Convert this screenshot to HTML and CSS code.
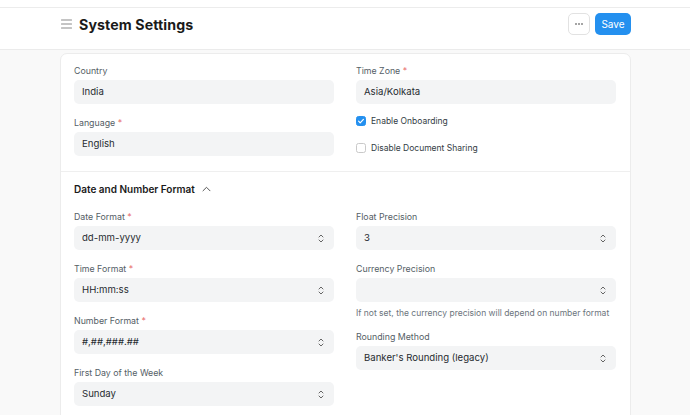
FILE: index.html
```html
<!DOCTYPE html>
<html>
<head>
<meta charset="utf-8">
<link rel="stylesheet" href="styles.css">
</head>
<body>
<div class="navbar-edge"></div>
<header class="page-head">
  <div class="title-wrap">
    <svg class="hamburger" width="11" height="10" viewBox="0 0 11 10"><path d="M0.5 1h10M0.5 5h10M0.5 9h10" stroke="#8a8a8a" stroke-width="1.1" stroke-linecap="round"/></svg>
    <h1 class="title">System Settings</h1>
  </div>
  <div class="actions">
    <button class="btn-more"><svg width="8" height="2" viewBox="0 0 8 2"><circle cx="1" cy="1" r="0.8" fill="#333"/><circle cx="4" cy="1" r="0.8" fill="#333"/><circle cx="7" cy="1" r="0.8" fill="#333"/></svg></button>
    <button class="btn-save">Save</button>
  </div>
</header>
<main class="page-body">
  <div class="card">
    <section class="section first">
      <div class="grid">
        <div class="col">
          <div class="field">
            <div class="label">Country</div>
            <div class="input">India</div>
          </div>
          <div class="field">
            <div class="label">Language <span class="req">*</span></div>
            <div class="input">English</div>
          </div>
        </div>
        <div class="col">
          <div class="field">
            <div class="label">Time Zone <span class="req">*</span></div>
            <div class="input">Asia/Kolkata</div>
          </div>
          <div class="check-row first-check">
            <span class="checkbox checked"><svg width="8" height="8" viewBox="0 0 8 8"><path d="M1.6 4.2l1.6 1.6 3.2-3.4" stroke="#fff" stroke-width="1.2" fill="none" stroke-linecap="round" stroke-linejoin="round"/></svg></span>
            <span class="check-label">Enable Onboarding</span>
          </div>
          <div class="check-row">
            <span class="checkbox"></span>
            <span class="check-label">Disable Document Sharing</span>
          </div>
        </div>
      </div>
    </section>
    <section class="section">
      <div class="section-head">Date and Number Format <svg class="collapse" width="9" height="6" viewBox="0 0 9 6"><path d="M1 4.8l3.5-3.5 3.5 3.5" stroke="#444" stroke-width="0.9" fill="none" stroke-linecap="round" stroke-linejoin="round"/></svg></div>
      <div class="grid">
        <div class="col">
          <div class="field">
            <div class="label">Date Format <span class="req">*</span></div>
            <div class="input select">dd-mm-yyyy<svg class="arrows" width="6" height="9" viewBox="0 0 6 9"><path d="M1 3l2-2 2 2M1 6l2 2 2-2" stroke="#555" stroke-width="0.9" fill="none" stroke-linecap="round" stroke-linejoin="round"/></svg></div>
          </div>
          <div class="field">
            <div class="label">Time Format <span class="req">*</span></div>
            <div class="input select">HH:mm:ss<svg class="arrows" width="6" height="9" viewBox="0 0 6 9"><path d="M1 3l2-2 2 2M1 6l2 2 2-2" stroke="#555" stroke-width="0.9" fill="none" stroke-linecap="round" stroke-linejoin="round"/></svg></div>
          </div>
          <div class="field">
            <div class="label">Number Format <span class="req">*</span></div>
            <div class="input select">#,##,###.##<svg class="arrows" width="6" height="9" viewBox="0 0 6 9"><path d="M1 3l2-2 2 2M1 6l2 2 2-2" stroke="#555" stroke-width="0.9" fill="none" stroke-linecap="round" stroke-linejoin="round"/></svg></div>
          </div>
          <div class="field">
            <div class="label">First Day of the Week</div>
            <div class="input select">Sunday<svg class="arrows" width="6" height="9" viewBox="0 0 6 9"><path d="M1 3l2-2 2 2M1 6l2 2 2-2" stroke="#555" stroke-width="0.9" fill="none" stroke-linecap="round" stroke-linejoin="round"/></svg></div>
          </div>
        </div>
        <div class="col">
          <div class="field">
            <div class="label">Float Precision</div>
            <div class="input select">3<svg class="arrows" width="6" height="9" viewBox="0 0 6 9"><path d="M1 3l2-2 2 2M1 6l2 2 2-2" stroke="#555" stroke-width="0.9" fill="none" stroke-linecap="round" stroke-linejoin="round"/></svg></div>
          </div>
          <div class="field with-help">
            <div class="label">Currency Precision</div>
            <div class="input select"><svg class="arrows" width="6" height="9" viewBox="0 0 6 9"><path d="M1 3l2-2 2 2M1 6l2 2 2-2" stroke="#555" stroke-width="0.9" fill="none" stroke-linecap="round" stroke-linejoin="round"/></svg></div>
            <div class="help">If not set, the currency precision will depend on number format</div>
          </div>
          <div class="field">
            <div class="label">Rounding Method</div>
            <div class="input select">Banker's Rounding (legacy)<svg class="arrows" width="6" height="9" viewBox="0 0 6 9"><path d="M1 3l2-2 2 2M1 6l2 2 2-2" stroke="#555" stroke-width="0.9" fill="none" stroke-linecap="round" stroke-linejoin="round"/></svg></div>
          </div>
        </div>
      </div>
    </section>
  </div>
</main>
</body>
</html>
```

FILE: styles.css
```css
* { box-sizing: border-box; }
html, body { margin: 0; padding: 0; }
body {
  font-family: Inter, "Noto Sans", sans-serif;
  background: #f9f9f9;
  color: #1f272e;
  height: 415px;
  overflow: hidden;
}
.navbar-edge {
  height: 8px;
  background: #fff;
  border-bottom: 1px solid #ececec;
}
.page-head {
  background: #fff;
  height: 42px;
  display: flex;
  justify-content: space-between;
  align-items: flex-start;
  padding: 5px 59px 0 61px;
  border-bottom: 1px solid #ebebeb;
}
.title-wrap {
  display: flex;
  align-items: center;
  height: 22px;
  gap: 7px;
}
.hamburger { display: block; }
.title {
  margin: 0;
  font-size: 14.2px;
  font-weight: 700;
  color: #1a1a1a;
  letter-spacing: 0.1px;
}
.actions {
  display: flex;
  gap: 5px;
}
.btn-more {
  width: 22px;
  height: 22px;
  background: #fff;
  border: 1px solid #e2e2e2;
  border-radius: 5px;
  padding: 0;
  display: flex;
  align-items: center;
  justify-content: center;
}
.btn-save {
  height: 22px;
  width: 36px;
  background: #2490ef;
  color: #fff;
  border: none;
  border-radius: 5px;
  font-family: Inter, sans-serif;
  font-size: 10px;
  padding: 0;
}
.page-body {
  padding: 3px 59px 0 60px;
}
.card {
  background: #fff;
  border: 1px solid #ececec;
  border-radius: 7px 7px 0 0;
  height: 400px;
}
.section {
  padding: 10px 14px 14px 13px;
}
.section.first {
  padding-top: 10px;
  padding-bottom: 15px;
  border-bottom: 1px solid #efefef;
}
.section.first .field:last-child { margin-bottom: 0; }
.grid {
  display: grid;
  grid-template-columns: 260px 260px;
  column-gap: 22px;
}
.field {
  margin-bottom: 12px;
}
.label {
  font-size: 8.8px;
  line-height: 13px;
  color: #555e66;
  margin-bottom: 3px;
}
.req { color: #e86c6c; }
.input {
  height: 24px;
  background: #f3f4f5;
  border-radius: 5px;
  font-size: 9.6px;
  line-height: 24px;
  padding: 0 8px;
  color: #262b30;
  position: relative;
}
.arrows {
  position: absolute;
  right: 10px;
  top: 7.5px;
}
.check-row {
  display: flex;
  align-items: center;
  gap: 5px;
  height: 12px;
  margin-bottom: 15px;
}
.check-row:last-child { margin-bottom: 0; }
.first-check { margin-top: -1px; }
.checkbox {
  width: 10px;
  height: 10px;
  border: 1px solid #c9c9c9;
  border-radius: 2.5px;
  background: #fff;
  display: flex;
  align-items: center;
  justify-content: center;
}
.checkbox.checked {
  background: #2490ef;
  border-color: #2490ef;
}
.check-label {
  font-size: 8.5px;
  color: #333c44;
}
.section-head {
  font-size: 10px;
  font-weight: 600;
  color: #1a1a1a;
  line-height: 14px;
  margin-top: 0;
  margin-bottom: 14px;
  display: flex;
  align-items: center;
  gap: 7px;
}
.with-help { margin-bottom: 11px; }
.with-help .input { margin-bottom: 5px; }
.help {
  font-size: 8.5px;
  line-height: 12px;
  color: #6c757d;
}
```
